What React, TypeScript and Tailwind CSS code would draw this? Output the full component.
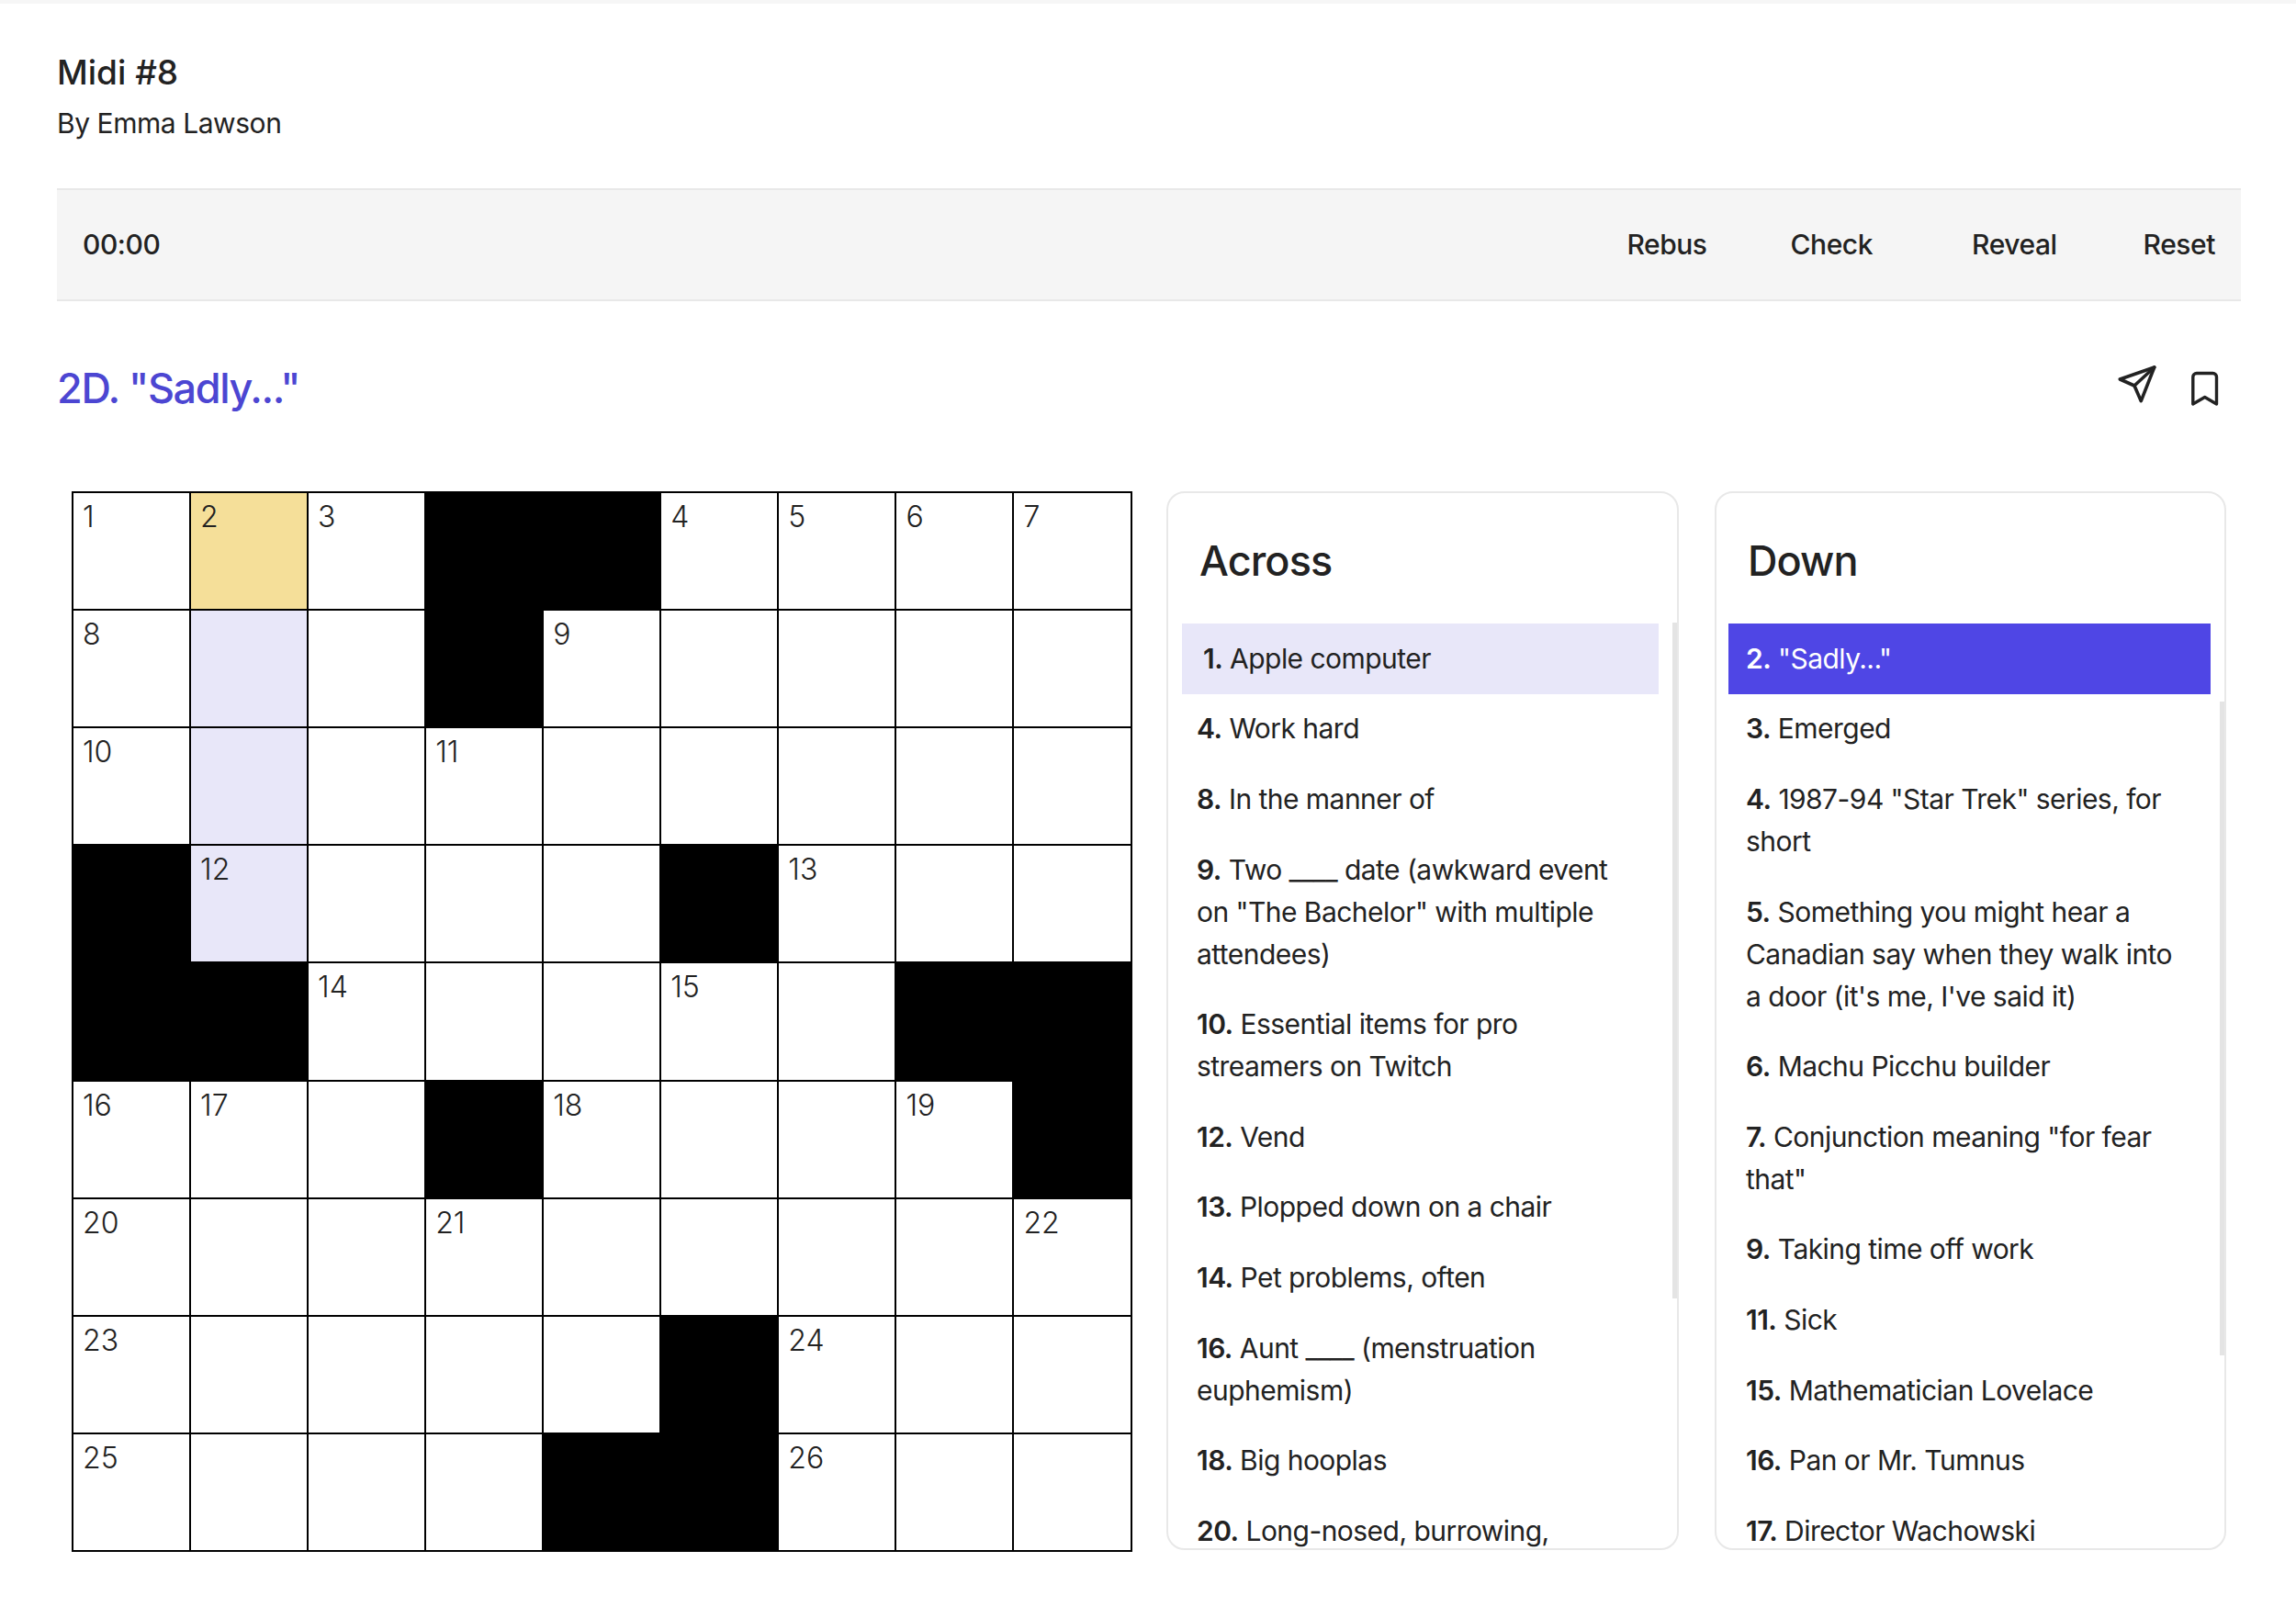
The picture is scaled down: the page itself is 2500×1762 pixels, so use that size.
import React from 'react';

type Cell = { n?: number; black?: boolean; tone?: 'active' | 'word' };

// # = black square, numbers = clue labels, . = empty
const layout = [
  ['1', '2', '3', '#', '#', '4', '5', '6', '7'],
  ['8', '.', '.', '#', '9', '.', '.', '.', '.'],
  ['10', '.', '.', '11', '.', '.', '.', '.', '.'],
  ['#', '12', '.', '.', '.', '#', '13', '.', '.'],
  ['#', '#', '14', '.', '.', '15', '.', '#', '#'],
  ['16', '17', '.', '#', '18', '.', '.', '19', '#'],
  ['20', '.', '.', '21', '.', '.', '.', '.', '22'],
  ['23', '.', '.', '.', '.', '#', '24', '.', '.'],
  ['25', '.', '.', '.', '#', '#', '26', '.', '.'],
];

const cells: Cell[] = layout.flatMap((row, r) =>
  row.map((v, c) => {
    const cell: Cell = {};
    if (v === '#') cell.black = true;
    else if (v !== '.') cell.n = Number(v);
    if (c === 1 && r === 0) cell.tone = 'active';
    if (c === 1 && r > 0 && r < 4) cell.tone = 'word';
    return cell;
  })
);

const across: [string, string][] = [
  ['1.', 'Apple computer'],
  ['4.', 'Work hard'],
  ['8.', 'In the manner of'],
  ['9.', 'Two ____ date (awkward event on "The Bachelor" with multiple attendees)'],
  ['10.', 'Essential items for pro streamers on Twitch'],
  ['12.', 'Vend'],
  ['13.', 'Plopped down on a chair'],
  ['14.', 'Pet problems, often'],
  ['16.', 'Aunt ____ (menstruation euphemism)'],
  ['18.', 'Big hooplas'],
  ['20.', 'Long-nosed, burrowing,'],
];

const down: [string, string][] = [
  ['2.', '"Sadly..."'],
  ['3.', 'Emerged'],
  ['4.', '1987-94 "Star Trek" series, for short'],
  ['5.', "Something you might hear a Canadian say when they walk into a door (it's me, I've said it)"],
  ['6.', 'Machu Picchu builder'],
  ['7.', 'Conjunction meaning "for fear that"'],
  ['9.', 'Taking time off work'],
  ['11.', 'Sick'],
  ['15.', 'Mathematician Lovelace'],
  ['16.', 'Pan or Mr. Tumnus'],
  ['17.', 'Director Wachowski'],
];

const Grid = () => (
  <div className="ml-4 grid h-[1155px] w-[1154.5px] shrink-0 grid-cols-9 grid-rows-9 border-t-2 border-l-2 border-black">
    {cells.map((cell, i) => (
      <div
        key={i}
        className={`border-r-2 border-b-2 border-black pt-[5px] pl-[10px] text-[32px] leading-[42px] font-light text-[#222] ${
          cell.black ? 'bg-black' : cell.tone === 'active' ? 'bg-[#f5df99]' : cell.tone === 'word' ? 'bg-[#e8e7f9]' : 'bg-white'
        }`}
      >
        {cell.n}
      </div>
    ))}
  </div>
);

const CluePanel = ({
  title,
  clues,
  className,
  listClass,
  rowClass,
  activeClass,
  thumbClass,
}: {
  title: string;
  clues: [string, string][];
  className: string;
  listClass: string;
  rowClass: string;
  activeClass: string;
  thumbClass: string;
}) => (
  <div className={`relative h-[1153px] overflow-hidden rounded-[20px] border-2 border-[#e8e8e8] bg-white ${className}`}>
    <h2 className="h-[142px] pt-[46px] pl-[34px] text-[45px] leading-[56px] font-medium tracking-[-0.02em] text-[#222]">{title}</h2>
    <ul className={listClass}>
      {clues.map(([num, text], i) => (
        <li
          key={num}
          className={`pt-[14.8px] pb-[15.8px] text-[30px] leading-[46px] tracking-[-0.018em] text-[#222] ${
            i === 0 ? activeClass : rowClass
          }`}
        >
          <span className="font-semibold">{num}</span> {text}
        </li>
      ))}
    </ul>
    <div className={`absolute right-0 w-[5px] bg-[#e4e4e4] ${thumbClass}`} />
  </div>
);

const PlaneIcon = () => (
  <svg viewBox="0 0 42 42" className="h-[42px] w-[42px] text-[#222]" fill="none" stroke="currentColor" strokeWidth="3.6" strokeLinecap="round" strokeLinejoin="round">
    <path d="M39.7 2 2.3 15 18 22l7.3 16.7Z" />
    <path d="M39.7 2 18 22" />
  </svg>
);

const BookmarkIcon = () => (
  <svg viewBox="0 0 33 41" className="h-[41px] w-[33px] text-[#222]" fill="none" stroke="currentColor" strokeWidth="3.4" strokeLinecap="round" strokeLinejoin="round">
    <path d="M3.8 37V7.5a4 4 0 0 1 4-4h17.7a4 4 0 0 1 4 4V37l-12.8-7.5Z" />
  </svg>
);

export default function App() {
  return (
    <div
      className="h-[1762px] w-full overflow-hidden border-t-4 border-[#f6f6f6] bg-white text-[#222]"
      style={{ fontFamily: 'Inter, "Noto Sans", sans-serif' }}
    >
      <div className="pr-[60px] pl-[62px]">
        <header className="h-[201px] pt-[52px]">
          <h1 className="text-[37px] leading-[46px] font-medium">Midi #8</h1>
          <p className="mt-[10px] text-[30px] leading-[44px] font-normal tracking-[-0.015em]">By Emma Lawson</p>
        </header>

        <div className="flex h-[123px] items-center justify-between border-y-2 border-[#e8e8e8] bg-[#f5f5f5] pr-[28px] pl-[28px] text-[30px] font-medium tracking-[-0.015em]">
          <span>00:00</span>
          <div className="flex items-center">
            <button>Rebus</button>
            <button className="ml-[91px]">Check</button>
            <button className="ml-[108px]">Reveal</button>
            <button className="ml-[94px]">Reset</button>
          </div>
        </div>

        <div className="flex h-[207px] items-start justify-between pr-[23px]">
          <div className="mt-[67px] text-[45px] leading-[56px] font-medium tracking-[-0.03em] text-[#4c46d2]">2D. "Sadly..."</div>
          <div className="mt-[70px] flex items-start gap-[36px]">
            <PlaneIcon />
            <div className="pt-[5px]">
              <BookmarkIcon />
            </div>
          </div>
        </div>

        <div className="flex items-start">
          <Grid />
          <CluePanel
            title="Across"
            clues={across}
            className="ml-[37.5px] w-[558px]"
            listClass="pl-[15px]"
            rowClass="w-[519px] pr-[20px] pl-[16px]"
            activeClass="w-[519px] bg-[#e8e7f9] pr-[20px] pl-[23px]"
            thumbClass="top-[141px] h-[736px]"
          />
          <CluePanel
            title="Down"
            clues={down}
            className="ml-[39px] w-[557px]"
            listClass="pl-[13px]"
            rowClass="w-[525px] pr-[32px] pl-[19px]"
            activeClass="w-[525px] bg-[#4f46e5] pr-[32px] pl-[19px] !text-white"
            thumbClass="top-[227px] h-[712px]"
          />
        </div>
      </div>
    </div>
  );
}
